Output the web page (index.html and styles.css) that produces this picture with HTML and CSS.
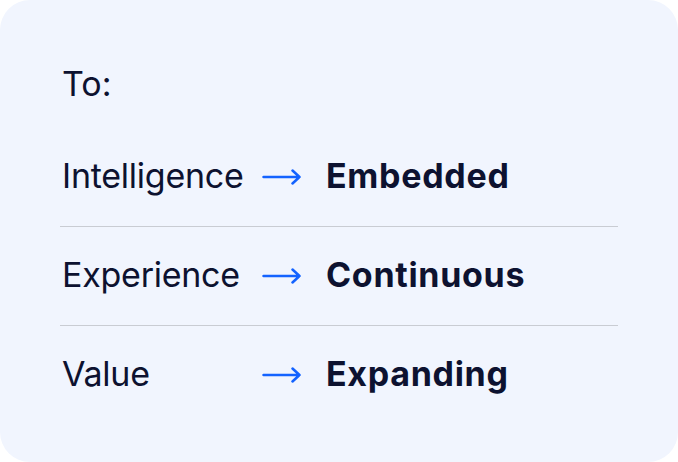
FILE: index.html
```html
<!DOCTYPE html>
<html lang="en">
<head>
<meta charset="utf-8">
<title>To:</title>
<link rel="stylesheet" href="styles.css">
</head>
<body>
<section class="card">
  <div class="heading">To:</div>
  <ul class="shifts">
    <li class="shift">
      <span class="label">Intelligence</span>
      <svg class="arrow" viewBox="0 0 40 16" width="40" height="16" aria-hidden="true"><path d="M1.5 8 H37.5 M30.5 1.5 L37.5 8 L30.5 14.5" fill="none" stroke="currentColor" stroke-width="2.5" stroke-linecap="round" stroke-linejoin="round"/></svg>
      <span class="value">Embedded</span>
    </li>
    <li class="shift">
      <span class="label">Experience</span>
      <svg class="arrow" viewBox="0 0 40 16" width="40" height="16" aria-hidden="true"><path d="M1.5 8 H37.5 M30.5 1.5 L37.5 8 L30.5 14.5" fill="none" stroke="currentColor" stroke-width="2.5" stroke-linecap="round" stroke-linejoin="round"/></svg>
      <span class="value">Continuous</span>
    </li>
    <li class="shift">
      <span class="label">Value</span>
      <svg class="arrow" viewBox="0 0 40 16" width="40" height="16" aria-hidden="true"><path d="M1.5 8 H37.5 M30.5 1.5 L37.5 8 L30.5 14.5" fill="none" stroke="currentColor" stroke-width="2.5" stroke-linecap="round" stroke-linejoin="round"/></svg>
      <span class="value">Expanding</span>
    </li>
  </ul>
</section>
</body>
</html>
```
FILE: styles.css
```css
html, body {
  margin: 0;
  padding: 0;
  background: #ffffff;
}
body {
  font-family: Inter, "Noto Sans", sans-serif;
  color: #0d1230;
}
.card {
  box-sizing: border-box;
  width: 678px;
  height: 462px;
  background: #f1f5fe;
  border-radius: 30px;
  padding: 64px 60px 0 62px;
}
.heading {
  font-size: 34px;
  line-height: 40px;
}
.shifts {
  list-style: none;
  margin: 24px 0 0;
  padding: 0;
}
.shift {
  display: grid;
  grid-template-columns: 200px 64px 1fr;
  align-items: center;
  padding: 28px 0 30px;
  font-size: 34px;
  line-height: 40px;
  border-bottom: 1px solid #c9ccd3;
  margin-left: -2px;
  padding-left: 2px;
}
.shift:last-child {
  border-bottom: none;
}
.label {
  letter-spacing: -0.25px;
}
.arrow {
  color: #1463ff;
  display: block;
  margin-left: 0;
  margin-top: 2px;
}
.value {
  font-weight: 700;
  letter-spacing: 0.7px;
}
```
